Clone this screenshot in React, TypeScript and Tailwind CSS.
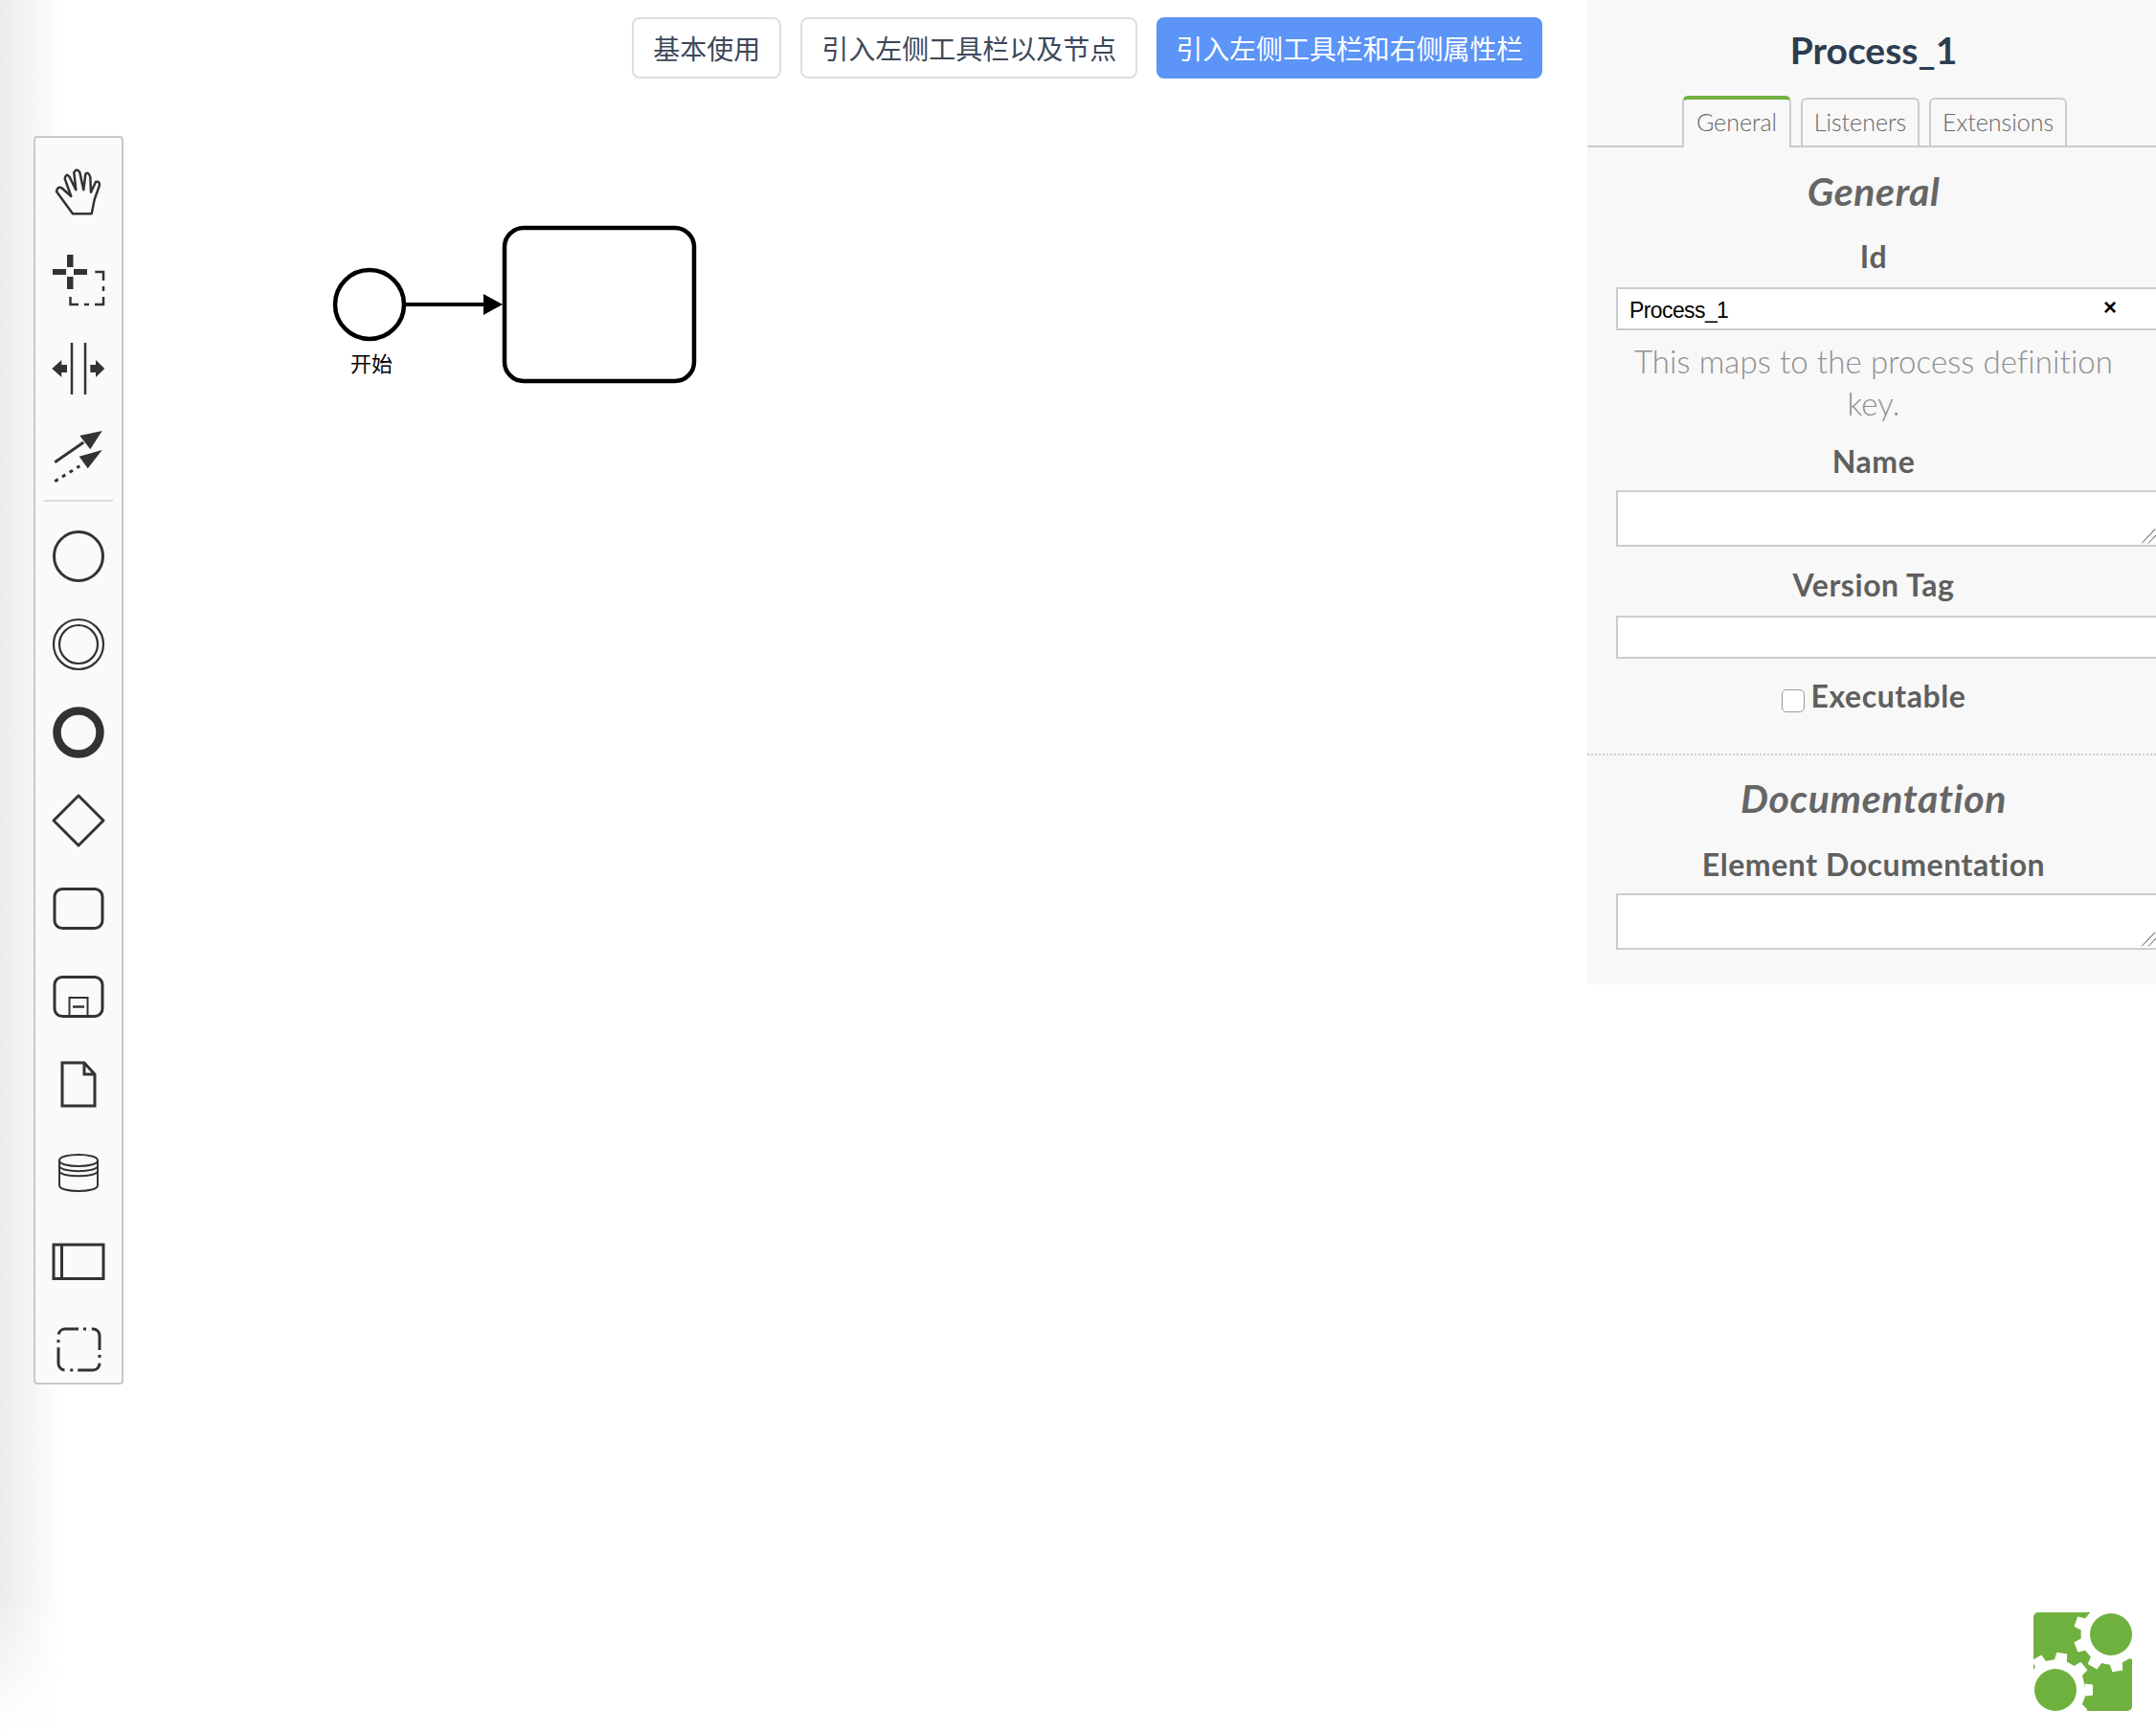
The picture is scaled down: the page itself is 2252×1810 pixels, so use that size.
import React from "react";

const gearPath = (cx: number, cy: number, body: number, tip: number, halfW: number) => {
  const teeth = 9;
  let d = `M${cx + body} ${cy - 0.01}`;
  for (let i = 0; i < teeth; i++) {
    const a = (i * 2 * Math.PI) / teeth;
    const c = Math.cos(a);
    const s = Math.sin(a);
    const p = (r: number, w: number) => `${(cx + r * c - w * s).toFixed(2)} ${(cy + r * s + w * c).toFixed(2)}`;
    d += ` L${p(body, -halfW)} L${p(tip, -halfW + 1)} L${p(tip, halfW - 1)} L${p(body, halfW)}`;
  }
  return d + " Z";
};

const Logo = () => (
  <svg width="103" height="103" viewBox="0 0 103 103" className="absolute right-[25px] bottom-[23px] overflow-hidden">
    <rect x="0" y="0" width="103" height="103" rx="5" fill="#6fb13f" />
    <circle cx="81" cy="23" r="31" fill="#fff" />
    <path d={gearPath(81, 23, 31, 39, 6.5)} fill="#fff" />
    <circle cx="23" cy="81" r="31" fill="#fff" />
    <path d={gearPath(23, 81, 31, 39, 6.5)} fill="#fff" />
    <circle cx="81" cy="23" r="22" fill="#6fb13f" />
    <circle cx="23" cy="81" r="22" fill="#6fb13f" />
  </svg>
);

const Ic = ({ children }: { children: React.ReactNode }) => (
  <svg width="64" height="64" viewBox="0 0 64 64" fill="none" stroke="#333" strokeWidth="2.5" className="block mx-auto shrink-0">
    {children}
  </svg>
);

const Palette = () => (
  <div className="absolute left-[35px] top-[142px] w-[94px] h-[1304px] bg-[#fafafa] border-2 border-[#c8c8c8] rounded-[4px] pt-[26px] flex flex-col gap-[28px]">
    <Ic>
      <path
        strokeLinejoin="round"
        d="M26 53.3 L45.7 53.3 L48.7 38.3 L54 23.3 Q53.6 18.5 50 20 L45 30.7 L44.3 15 Q42.7 9 39.3 11.7 L37.3 28.3 L33.3 10 Q30 5 27.3 10 L29.3 28.3 L22.7 15 Q19.3 10 17.7 16.7 L24.3 35 L15 26.7 Q10 24 9 30 Z"
      />
    </Ic>
    <Ic>
      <g fill="#333" stroke="none">
        <rect x="5" y="19" width="14" height="6" />
        <rect x="27" y="19" width="14" height="6" />
        <rect x="20" y="4" width="6.5" height="13" />
        <rect x="20" y="27" width="6.5" height="13" />
      </g>
      <path d="M49.3 22 H58 V31 M58 37 V42 M58 48 V56 H49 M43 56 H38 M32 56 H23.5 V48" />
    </Ic>
    <Ic>
      <path d="M25 4 V58 M39 4 V58" />
      <path fill="#333" stroke="none" d="M4.3 31 L14.3 22 V27 H20 V35 H14.3 V40 Z M59.3 31 L50 22 V27 H44.3 V35 H50 V40 Z" />
    </Ic>
    <Ic>
      <path strokeWidth="3" d="M7.3 36.7 L37.3 16" />
      <path fill="#333" stroke="none" d="M56.7 4 L33.3 9 L44.3 23.3 Z M56.7 24 L32.7 30.7 L41.7 43.3 Z" />
      <path strokeWidth="3" strokeDasharray="4 5" d="M7.3 56.7 L33.3 40.7" />
    </Ic>
    <div className="h-[2px] w-[72px] mx-auto bg-[#ddd] -mt-[16px] -mb-[3px]" />
    <Ic>
      <circle cx="32" cy="32" r="25.5" strokeWidth="3" />
    </Ic>
    <Ic>
      <circle cx="32" cy="32" r="26" strokeWidth="2.2" />
      <circle cx="32" cy="32" r="20" strokeWidth="2.2" />
    </Ic>
    <Ic>
      <circle cx="32" cy="32" r="22.5" strokeWidth="8.5" />
    </Ic>
    <Ic>
      <path strokeWidth="3" strokeLinejoin="round" d="M32 6 L58 32 L32 58 L6 32 Z" />
    </Ic>
    <Ic>
      <rect x="7" y="11.5" width="50" height="41" rx="8" strokeWidth="3" />
    </Ic>
    <Ic>
      <rect x="7" y="11.5" width="50" height="41" rx="8" strokeWidth="3" />
      <rect x="22.5" y="33" width="19" height="20" strokeWidth="2" />
      <path d="M26 42.5 H38" />
    </Ic>
    <Ic>
      <path d="M15 9 H38 L49 21 V54 H15 Z M38 9 V21 H49" strokeWidth="3" />
    </Ic>
    <Ic>
      <path strokeWidth="2" d="M12 19 C12 11 52 11 52 19 V45 C52 53 12 53 12 45 Z M12 19 C12 27 52 27 52 19 M12 24.5 C12 32 52 32 52 24.5 M12 30 C12 37 52 37 52 30" />
    </Ic>
    <Ic>
      <rect x="6" y="15" width="52" height="35.5" strokeWidth="3" />
      <path d="M14.5 15 V50.5" strokeWidth="3" />
    </Ic>
    <Ic>
      <rect x="11" y="11" width="43" height="43" rx="7" strokeDasharray="27 5 3 5.8" strokeDashoffset="13" strokeWidth="3" />
    </Ic>
  </div>
);

const Diagram = () => (
  <>
    <svg width="760" height="420" viewBox="0 0 760 420" fill="none" stroke="#000" className="absolute left-0 top-0">
      <circle cx="386" cy="318" r="36" strokeWidth="4.5" />
      <path d="M424 318 H508" strokeWidth="4" />
      <path d="M525 318 L505 307 V329 Z" fill="#000" stroke="none" />
      <rect x="527" y="238" width="198" height="160" rx="20" strokeWidth="4.5" />
    </svg>
    <div className="absolute left-[344px] top-[367px] w-[88px] text-center text-[22px] leading-[28px] text-black font-['Liberation_Sans','Noto_Sans_CJK_SC',sans-serif]">
      开始
    </div>
  </>
);

const Label = ({ children, className }: { children: React.ReactNode; className: string }) => (
  <div className={`-ml-[30px] w-[598px] text-center text-[32px] leading-[36px] tracking-[0.55px] font-bold text-[#5f5f5f] ${className}`}>
    {children}
  </div>
);

const Field = "block w-[568px] bg-white border-2 border-[#ccc] outline-none font-['Liberation_Sans',sans-serif] text-black";

const Area = ({ className }: { className: string }) => (
  <div className={`relative ${className}`}>
    <textarea readOnly className={`${Field} h-[59px] resize-none`} />
    <svg width="15" height="16" viewBox="0 0 15 16" fill="none" className="absolute right-0 bottom-[3px]">
      <path d="M0 15.5 L14 0.5 M7 15.5 L15 7" stroke="#555" strokeWidth="1" />
      <path d="M1 15.5 L15 1 M8 15.5 L15 8" stroke="#ddd" strokeWidth="1" />
    </svg>
  </div>
);

const heading = "-ml-[30px] w-[598px] text-center text-[41px] leading-[44px] tracking-[0.6px] font-bold italic text-[#666]";
const tab = "text-center text-[25px] leading-[46px] text-[#666] font-light";

const Panel = () => (
  <div className="w-[594px] shrink-0 self-start h-[1028px] bg-[#f8f8f8] overflow-hidden font-['Lato',sans-serif]">
    <h2 className="pt-[29px] pb-[1px] w-[598px] text-center text-[39px] leading-[46px] font-bold text-[#2c3e50]">Process_1</h2>
    <div className="mt-[24px] h-[54px] border-b-2 border-[#ccc] pl-[99px] flex items-end gap-[10px]">
      <div className={`w-[114px] h-[54px] -mb-[2px] bg-[#f8f8f8] border-x-2 border-[#ccc] border-t-4 border-t-[#6fb13f] rounded-t-[6px] ${tab}`}>
        General
      </div>
      <div className={`w-[124px] h-[50px] border-2 border-b-0 border-[#ccc] rounded-t-[6px] ${tab}`}>Listeners</div>
      <div className={`w-[144px] h-[50px] border-2 border-b-0 border-[#ccc] rounded-t-[6px] ${tab}`}>Extensions</div>
    </div>
    <div className="pl-[30px]">
      <h3 className={`mt-[24px] ${heading}`}>General</h3>
      <Label className="mt-[28px]">Id</Label>
      <div className="relative mt-[14px]">
        <input
          readOnly
          value="Process_1"
          className={`${Field} h-[45px] pl-[12px] pt-[3px] text-[23px] tracking-[-0.6px]`}
        />
        <span className="absolute left-[509px] top-[5px] text-[24px] leading-[32px] font-bold text-black font-['Liberation_Sans',sans-serif]">×</span>
      </div>
      <p className="mt-[10px] -ml-[30px] w-[598px] px-[30px] text-center text-[33px] leading-[44px] tracking-[0.1px] font-light text-[#8f8f8f]">
        This maps to the process definition key.
      </p>
      <Label className="mt-[21px]">Name</Label>
      <Area className="mt-[12px]" />
      <Label className="mt-[22px]">Version Tag</Label>
      <input readOnly className={`${Field} mt-[14px] h-[45px]`} />
      <div className="-ml-[30px] w-[598px] mt-[21px] flex justify-center items-start h-[36px] text-[32px] leading-[36px] tracking-[0.55px] font-bold text-[#5f5f5f]">
        <span className="mt-[11px] mr-[7px] w-[24px] h-[24px] bg-white border border-[#999] rounded-[5px]" />
        Executable
      </div>
    </div>
    <div className="mt-[42px] border-t-2 border-dotted border-[#ccc] pl-[30px]">
      <h3 className={`mt-[23px] ${heading}`}>Documentation</h3>
      <Label className="mt-[29px]">Element Documentation</Label>
      <Area className="mt-[12px]" />
    </div>
  </div>
);

const btn = "h-[64px] rounded-[8px] text-[28px] leading-[56px] border-2 whitespace-nowrap";

export default function App() {
  return (
    <div className="relative flex h-screen overflow-hidden bg-white font-['Noto_Sans_CJK_SC',sans-serif]">
      <div className="absolute left-0 top-0 w-[64px] h-full bg-linear-to-r from-[#ebebeb] to-transparent [mask-image:linear-gradient(to_bottom,black_92%,transparent)]" />
      <main className="relative flex-1">
        <div className="relative flex justify-end gap-[20px] pt-[18px] pr-[47px]">
          <button className={`${btn} px-[20px] bg-white border-[#dcdfe6] text-[#3c4858]`}>基本使用</button>
          <button className={`${btn} px-[20px] bg-white border-[#dcdfe6] text-[#3c4858]`}>引入左侧工具栏以及节点</button>
          <button className={`${btn} px-[18px] tracking-[-0.1px] bg-[#5c94f7] border-[#5c94f7] text-white`}>引入左侧工具栏和右侧属性栏</button>
        </div>
        <Diagram />
        <Palette />
      </main>
      <Panel />
      <Logo />
    </div>
  );
}
